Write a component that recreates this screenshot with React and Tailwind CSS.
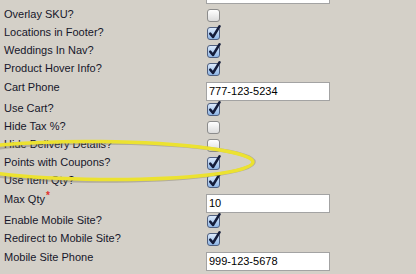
import React from 'react';

const ROWS = [
  { label: 'Overlay SKU?', type: 'check', checked: false },
  { label: 'Locations in Footer?', type: 'check', checked: true },
  { label: 'Weddings In Nav?', type: 'check', checked: true },
  { label: 'Product Hover Info?', type: 'check', checked: true },
  { label: 'Cart Phone', type: 'text', value: '777-123-5234' },
  { label: 'Use Cart?', type: 'check', checked: true },
  { label: 'Hide Tax %?', type: 'check', checked: false },
  { label: 'Hide Delivery Details?', type: 'check', checked: false },
  { label: 'Points with Coupons?', type: 'check', checked: true },
  { label: 'Use Item Qty?', type: 'check', checked: true },
  { label: 'Max Qty', type: 'text', value: '10', required: true },
  { label: 'Enable Mobile Site?', type: 'check', checked: true },
  { label: 'Redirect to Mobile Site?', type: 'check', checked: true },
  { label: 'Mobile Site Phone', type: 'text', value: '999-123-5678' },
];

function Check({ checked }) {
  if (!checked)
    return (
      <span className="ml-[1px] mt-[2px] block h-[13px] w-[13px] rounded-[3px] border border-[#8c8c8c] bg-gradient-to-b from-[#ffffff] to-[#dcdcdc]" />
    );
  return (
    <span className="relative ml-[1px] mt-[2px] block h-[13px] w-[13px] rounded-[3px] border border-[#4f5f80] bg-gradient-to-b from-[#dbe9fb] to-[#8fb6e6]">
      <svg className="absolute left-[0px] top-[-3px] overflow-visible" width="13" height="15" viewBox="0 0 13 15">
        <path d="M2.2 8.6 L5 12 L11.6 1.2" fill="none" stroke="#141c3a" strokeWidth="2.5" strokeLinecap="round" strokeLinejoin="round" />
      </svg>
    </span>
  );
}

function TextBox({ value }) {
  return (
    <div className="mt-[3px] flex h-[19px] w-[124px] items-center border border-[#a3a3a3] bg-white pl-[2px] text-[11px] leading-none text-black">
      {value}
    </div>
  );
}

function Row({ row }) {
  const isText = row.type === 'text';
  return (
    <div className={isText ? 'flex h-[22px] items-start' : 'flex h-[18px] items-start'}>
      <div className={isText ? 'w-[202px] pt-[1px] leading-[14px] text-[#16162a]' : 'w-[202px] pt-[0px] leading-[14px] text-[#16162a]'}>
        {row.label}
        {row.required ? <span className="relative top-[-4px] ml-[1px] text-[10px] font-bold leading-none text-[#e0302c]">*</span> : null}
      </div>
      {isText ? <TextBox value={row.value} /> : <Check checked={row.checked} />}
    </div>
  );
}

export default function App() {
  return (
    <div
      className="relative h-[274px] w-[416px] overflow-hidden bg-[#d4d0c8] text-[11px]"
      style={{ fontFamily: '"Liberation Sans", Arial, sans-serif' }}
    >
      <div className="-mt-[18px] pl-[4px]">
        {/* row cut off at the top */}
        <div className="flex h-[25px] items-start">
          <div className="w-[202px]" />
          <TextBox value="" />
        </div>
        {ROWS.map((r) => (
          <Row key={r.label} row={r} />
        ))}
      </div>

      {/* hand-drawn highlight */}
      <svg className="pointer-events-none absolute left-0 top-0" width="416" height="274" viewBox="0 0 416 274">
        <ellipse cx="101" cy="162" rx="153" ry="19" fill="none" stroke="#6f6a50" strokeOpacity="0.35" strokeWidth="3.5" />
        <ellipse cx="100" cy="160.5" rx="153" ry="19" fill="none" stroke="#ece230" strokeWidth="3.5" transform="rotate(0.6 100 160)" />
      </svg>
    </div>
  );
}
